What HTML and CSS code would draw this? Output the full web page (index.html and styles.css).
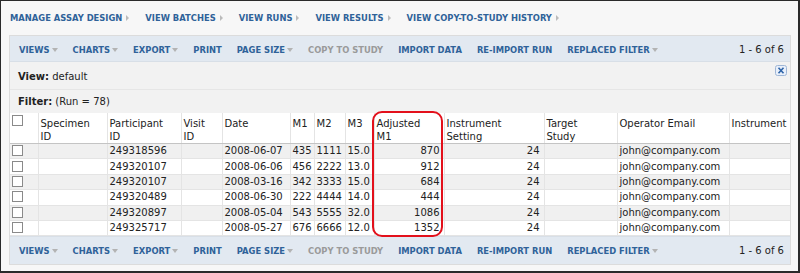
FILE: index.html
```html
<!DOCTYPE html>
<html lang="en">
  <head>
    <meta charset="UTF-8" />
    <meta name="viewport" content="width=device-width, initial-scale=1.0" />
    <title>Assay Runs</title>
    <link rel="stylesheet" href="styles.css">
  </head>
  <body>
    <div class="frame">
      <div class="nav">
        <a class="nav-link">Manage Assay Design</a>
        <a class="nav-link">View Batches</a>
        <a class="nav-link">View Runs</a>
        <a class="nav-link">View Results</a>
        <a class="nav-link">View Copy-to-Study History</a>
      </div>

      <div class="panel">
        <div class="toolbar">
          <span class="btn menu">Views</span>
          <span class="btn menu">Charts</span>
          <span class="btn menu">Export</span>
          <span class="btn">Print</span>
          <span class="btn menu">Page Size</span>
          <span class="btn disabled">Copy to Study</span>
          <span class="btn">Import Data</span>
          <span class="btn">Re-Import Run</span>
          <span class="btn menu">Replaced Filter</span>
          <span class="paging">1 - 6 of 6</span>
        </div>

        <div class="info view-row">
          <span><b>View:</b> default</span>
          <span class="close">
            <svg width="12" height="11" viewBox="0 0 12 11">
              <rect x="0.5" y="0.5" width="11" height="10" rx="2" fill="#e8effa" stroke="#9fb6d6" />
              <path d="M3.5 2.8 L8.5 8.2 M8.5 2.8 L3.5 8.2" stroke="#2e64a8" stroke-width="1.6" />
            </svg>
          </span>
        </div>
        <div class="info filter-row"><span><b>Filter:</b> (Run = 78)</span></div>

        <table class="grid">
          <colgroup>
            <col style="width: 28px" />
            <col style="width: 69px" />
            <col style="width: 74px" />
            <col style="width: 41px" />
            <col style="width: 68px" />
            <col style="width: 24px" />
            <col style="width: 31px" />
            <col style="width: 29px" />
            <col style="width: 70px" />
            <col style="width: 100px" />
            <col style="width: 73px" />
            <col style="width: 112px" />
            <col style="width: 61px" />
          </colgroup>
          <thead>
            <tr>
              <th><span class="cb"></span></th>
              <th>Specimen<br />ID</th>
              <th>Participant<br />ID</th>
              <th>Visit<br />ID</th>
              <th>Date</th>
              <th>M1</th>
              <th>M2</th>
              <th>M3</th>
              <th>Adjusted<br />M1</th>
              <th>Instrument<br />Setting</th>
              <th>Target<br />Study</th>
              <th>Operator Email</th>
              <th>Instrument</th>
            </tr>
          </thead>
          <tbody id="rows"></tbody>
        </table>

        <div class="toolbar bottom">
          <span class="btn menu">Views</span>
          <span class="btn menu">Charts</span>
          <span class="btn menu">Export</span>
          <span class="btn">Print</span>
          <span class="btn menu">Page Size</span>
          <span class="btn disabled">Copy to Study</span>
          <span class="btn">Import Data</span>
          <span class="btn">Re-Import Run</span>
          <span class="btn menu">Replaced Filter</span>
          <span class="paging">1 - 6 of 6</span>
        </div>

        <div class="highlight"></div>
      </div>
    </div>

    <script>
      const data = [
        ["249318596", "2008-06-07", 435, 1111, "15.0", 870],
        ["249320107", "2008-06-06", 456, 2222, "13.0", 912],
        ["249320107", "2008-03-16", 342, 3333, "15.0", 684],
        ["249320489", "2008-06-30", 222, 4444, "14.0", 444],
        ["249320897", "2008-05-04", 543, 5555, "32.0", 1086],
        ["249325717", "2008-05-27", 676, 6666, "12.0", 1352],
      ];

      const body = document.getElementById("rows");
      data.forEach(function (r) {
        const tr = document.createElement("tr");
        tr.innerHTML =
          '<td><span class="cb"></span></td><td></td>' +
          "<td>" + r[0] + "</td><td></td>" +
          "<td>" + r[1] + "</td><td>" + r[2] + "</td><td>" + r[3] + "</td><td>" + r[4] + "</td>" +
          '<td class="num">' + r[5] + '</td><td class="num">24</td><td></td>' +
          "<td>john@company.com</td><td></td>";
        body.appendChild(tr);
      });
    </script>
  </body>
</html>
```

FILE: styles.css
```css
html,
body {
  margin: 0;
  padding: 0;
}

body {
  width: 800px;
  height: 273px;
  font-family: "DejaVu Sans", Verdana, sans-serif;
  font-size: 10px;
  color: #222;
  overflow: hidden;
}

.frame {
  box-sizing: border-box;
  width: 800px;
  height: 273px;
  background-color: #f7f7f7;
  border-top: 1px solid #2a2a2a;
  border-left: 1px solid #2a2a2a;
  border-right: 2px solid #2a2a2a;
  border-bottom: 2px solid #2a2a2a;
  padding: 0 6px 0 8px;
}

.nav {
  display: flex;
  align-items: center;
  height: 34px;
  padding-left: 1px;
}

.nav-link {
  font-size: 8.4px;
  font-weight: bold;
  text-transform: uppercase;
  color: #2f6299;
  display: flex;
  align-items: center;
  margin-right: 16px;
}

.nav-link::after {
  content: "";
  margin-left: 4px;
  border-left: 3px solid #bbb;
  border-top: 3px solid transparent;
  border-bottom: 3px solid transparent;
}

.panel {
  position: relative;
  width: 782px;
  box-sizing: border-box;
  border: 1px solid #dcdcdc;
  background-color: #f2f2f2;
}

.toolbar {
  display: flex;
  align-items: center;
  height: 26px;
  padding: 2px 6px 0 9px;
  box-sizing: border-box;
  background-color: #e2e9f1;
  border-bottom: 1px solid #d8dfe7;
}

.toolbar.bottom {
  height: 28px;
  padding-top: 0;
  border-bottom: none;
  border-top: 1px solid #d8dfe7;
}

.btn {
  font-size: 8.4px;
  font-weight: bold;
  text-transform: uppercase;
  color: #2f6299;
  display: flex;
  align-items: center;
  margin-right: 15px;
}

.btn.disabled {
  color: #9a9a9a;
}

.btn.menu::after {
  content: "";
  margin-left: 2px;
  border-top: 4px solid #b3b3b3;
  border-left: 3.5px solid transparent;
  border-right: 3.5px solid transparent;
}

.paging {
  margin-left: auto;
  color: #222;
}

.info {
  display: flex;
  align-items: center;
  padding-left: 8px;
  padding-right: 3px;
}

.view-row {
  height: 25px;
  padding-top: 2px;
  justify-content: space-between;
  border-bottom: 1px solid #e6e6e6;
}

.close {
  display: flex;
  margin-top: -12px;
}

.filter-row {
  height: 23px;
}

.grid {
  table-layout: fixed;
  width: 780px;
  border-collapse: collapse;
  background-color: #fff;
}

.grid th {
  font-weight: normal;
  text-align: left;
  vertical-align: top;
  line-height: 13px;
  height: 25px;
  padding: 4px 2px 0;
  border-left: 1px solid #e4e4e4;
  border-bottom: 1px solid #c4c4c4;
  overflow: hidden;
  white-space: nowrap;
}

.grid td {
  height: 14.4px;
  line-height: 14px;
  padding: 0 2px;
  border-left: 1px solid #e4e4e4;
  border-bottom: 1px solid #e4e4e4;
  white-space: nowrap;
  overflow: hidden;
}

.grid th:first-child,
.grid td:first-child {
  border-left: none;
}

.grid th:first-child {
  padding-top: 1px;
}

.grid tbody tr:nth-child(odd) {
  background-color: #f0f0f0;
}

.grid td.num {
  text-align: right;
  padding-right: 4px;
}

.cb {
  display: inline-block;
  width: 9px;
  height: 9px;
  margin-top: 1px;
  border: 1px solid #8a8a8a;
  background-color: #fff;
  vertical-align: top;
}

.highlight {
  position: absolute;
  left: 362px;
  top: 75px;
  width: 71px;
  height: 126px;
  box-sizing: border-box;
  border: 2px solid #e3101b;
  border-radius: 10px;
  pointer-events: none;
}
```
